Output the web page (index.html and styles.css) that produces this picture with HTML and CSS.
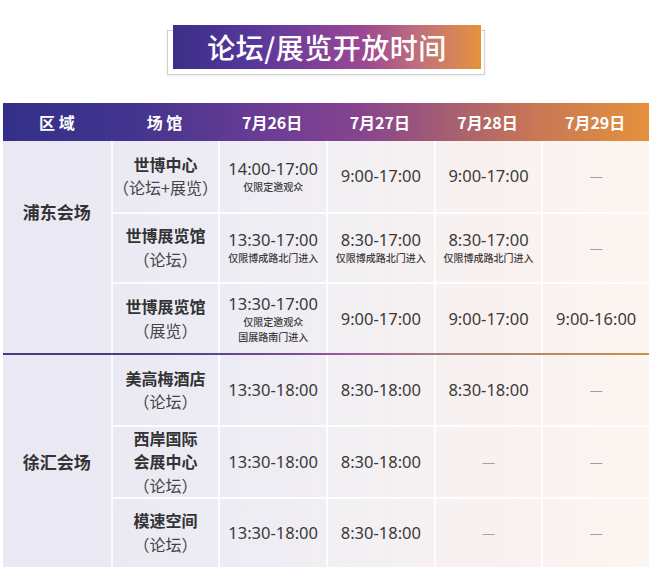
FILE: index.html
```html
<!DOCTYPE html>
<html lang="zh-CN">
<head>
<meta charset="utf-8">
<title>论坛/展览开放时间</title>
<link rel="stylesheet" href="styles.css">
</head>
<body>
<div class="page">
  <div class="title-frame">
    <div class="title-bar">论坛/展览开放时间</div>
  </div>

  <div class="schedule">
    <div class="head">
      <div class="hcell">区&nbsp;域</div>
      <div class="hcell">场&nbsp;馆</div>
      <div class="hcell">7月26日</div>
      <div class="hcell">7月27日</div>
      <div class="hcell">7月28日</div>
      <div class="hcell">7月29日</div>
    </div>

    <div class="body">
      <div class="group">
        <div class="region region-top">浦东会场</div>

        <div class="cell venue"><b>世博中心</b><span>（论坛+展览）</span></div>
        <div class="cell"><span class="time">14:00-17:00</span><span class="note">仅限定邀观众</span></div>
        <div class="cell"><span class="time">9:00-17:00</span></div>
        <div class="cell"><span class="time">9:00-17:00</span></div>
        <div class="cell"><span class="dash">—</span></div>

        <div class="cell venue row"><b>世博展览馆</b><span>（论坛）</span></div>
        <div class="cell row"><span class="time">13:30-17:00</span><span class="note">仅限博成路北门进入</span></div>
        <div class="cell row"><span class="time">8:30-17:00</span><span class="note">仅限博成路北门进入</span></div>
        <div class="cell row"><span class="time">8:30-17:00</span><span class="note">仅限博成路北门进入</span></div>
        <div class="cell row"><span class="dash">—</span></div>

        <div class="cell venue row"><b>世博展览馆</b><span>（展览）</span></div>
        <div class="cell row"><span class="time">13:30-17:00</span><span class="note">仅限定邀观众</span><span class="note">国展路南门进入</span></div>
        <div class="cell row"><span class="time">9:00-17:00</span></div>
        <div class="cell row"><span class="time">9:00-17:00</span></div>
        <div class="cell row"><span class="time">9:00-16:00</span></div>
      </div>

      <div class="divider"></div>

      <div class="group">
        <div class="region">徐汇会场</div>

        <div class="cell venue"><b>美高梅酒店</b><span>（论坛）</span></div>
        <div class="cell"><span class="time">13:30-18:00</span></div>
        <div class="cell"><span class="time">8:30-18:00</span></div>
        <div class="cell"><span class="time">8:30-18:00</span></div>
        <div class="cell"><span class="dash">—</span></div>

        <div class="cell venue row tight"><b>西岸国际</b><b>会展中心</b><span>（论坛）</span></div>
        <div class="cell row"><span class="time">13:30-18:00</span></div>
        <div class="cell row"><span class="time">8:30-18:00</span></div>
        <div class="cell row"><span class="dash">—</span></div>
        <div class="cell row"><span class="dash">—</span></div>

        <div class="cell venue row"><b>模速空间</b><span>（论坛）</span></div>
        <div class="cell row"><span class="time">13:30-18:00</span></div>
        <div class="cell row"><span class="time">8:30-18:00</span></div>
        <div class="cell row"><span class="dash">—</span></div>
        <div class="cell row"><span class="dash">—</span></div>
      </div>
    </div>
  </div>
</div>
</body>
</html>
```

FILE: styles.css
```css
* { box-sizing: border-box; }

html, body {
  margin: 0;
  padding: 0;
  background: #ffffff;
}

body {
  font-family: "Noto Sans", "Noto Sans CJK SC", sans-serif;
  color: #3a3a3a;
}

.page {
  width: 657px;
  height: 575px;
  padding-top: 30px;
  overflow: hidden;
}

/* ---------- title ---------- */
.title-frame {
  width: 318px;
  height: 45px;
  margin-left: 167px;
  border: 1px solid #cfcfd4;
  box-shadow: 0 1px 3px rgba(0,0,0,0.08);
}

.title-bar {
  width: 308px;
  height: 44px;
  margin: -6px 0 0 5px;
  display: flex;
  align-items: center;
  justify-content: center;
  background: linear-gradient(90deg, #3a2f88 0%, #56379a 25%, #7d3f9a 45%, #9c4892 62%, #c0707a 80%, #e6923e 100%);
  color: #ffffff;
  font-family: "Noto Sans CJK SC", sans-serif;
  font-size: 28px;
  font-weight: 500;
  letter-spacing: 0.5px;
}

/* ---------- table ---------- */
.schedule {
  width: 646px;
  margin: 28px 0 0 3px;
}

.head {
  display: grid;
  grid-template-columns: repeat(6, 1fr);
  height: 38px;
  background: linear-gradient(90deg, #33308a 0%, #42348e 20%, #6a3c94 40%, #86448f 55%, #a8606f 70%, #c87656 82%, #e4923c 100%);
}

.hcell {
  display: flex;
  align-items: center;
  justify-content: center;
  color: #ffffff;
  font-family: "Noto Sans CJK SC", sans-serif;
  font-size: 16px;
  font-weight: 700;
}

.body {
  background: linear-gradient(90deg, #e9e8f3 0%, #edecf4 35%, #f3f0f3 55%, #f9f1f0 75%, #fdf5f1 100%);
}

.group {
  display: grid;
  grid-template-columns: repeat(6, 1fr);
  grid-template-rows: repeat(3, 1fr);
  height: 212px;
}

.region {
  grid-row: 1 / span 3;
  display: flex;
  align-items: center;
  justify-content: center;
  font-family: "Noto Sans CJK SC", sans-serif;
  font-size: 17px;
  font-weight: 700;
  color: #333333;
}

.region-top {
  padding-bottom: 71px;
}

.cell {
  display: flex;
  flex-direction: column;
  align-items: center;
  justify-content: center;
  border-left: 2px solid rgba(255,255,255,0.85);
  text-align: center;
}

.cell.row {
  border-top: 2px solid rgba(255,255,255,0.85);
}

.venue {
  font-family: "Noto Sans CJK SC", sans-serif;
  font-size: 16px;
  line-height: 23.5px;
  color: #333333;
}

.venue.tight {
  line-height: 23.2px;
}

.venue b {
  font-weight: 700;
}

.venue span {
  font-weight: 400;
  color: #444444;
}

.time {
  font-size: 16.5px;
  line-height: 20px;
  color: #3a3a3a;
}

.note {
  font-family: "Noto Sans CJK SC", sans-serif;
  font-size: 10px;
  line-height: 15px;
  font-weight: 500;
  color: #3c3c3c;
}

.dash {
  font-size: 13px;
  color: #a0a0a0;
}

.divider {
  height: 2px;
  background: linear-gradient(90deg, #3e3c84 0%, #4a4288 25%, #7a4c9e 45%, #9a58a4 52%, #a88080 68%, #c4944e 100%);
}
```
